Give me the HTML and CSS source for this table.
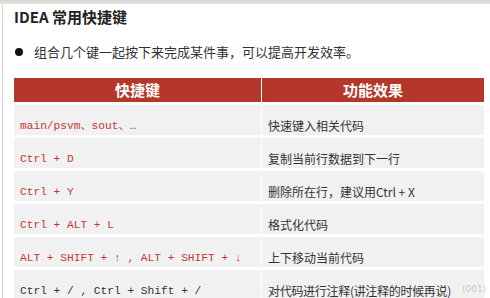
FILE: index.html
```html
<!DOCTYPE html>
<html lang="zh">
<head>
<meta charset="utf-8">
<link rel="stylesheet" href="styles.css">
</head>
<body>
<div class="topbar"></div>
<div class="page">
  <h1 class="title">IDEA 常用快捷键</h1>
  <p class="bullet"><span class="dot"></span>组合几个键一起按下来完成某件事，可以提高开发效率。</p>
  <div class="table">
    <div class="th">快捷键</div>
    <div class="th">功能效果</div>
    <div class="td key">main/psvm、sout、…</div>
    <div class="td">快速键入相关代码</div>
    <div class="td key">Ctrl + D</div>
    <div class="td">复制当前行数据到下一行</div>
    <div class="td key">Ctrl + Y</div>
    <div class="td">删除所在行，建议用Ctrl + X</div>
    <div class="td key">Ctrl + ALT + L</div>
    <div class="td">格式化代码</div>
    <div class="td key">ALT + SHIFT + ↑ , ALT + SHIFT + ↓</div>
    <div class="td">上下移动当前代码</div>
    <div class="td key dark">Ctrl + / , Ctrl + Shift + /</div>
    <div class="td last">对代码进行注释(讲注释的时候再说)</div>
  </div>
  <span class="mark">(001)</span>
</div>
</body>
</html>
```
FILE: styles.css
```css
html, body {
  margin: 0;
  padding: 0;
  background: #fff;
  overflow: hidden;
}
body {
  width: 490px;
  height: 298px;
  font-family: "Noto Sans CJK SC", "Noto Sans", sans-serif;
  color: #333;
}
.topbar {
  height: 4px;
  background: linear-gradient(#d6d5d0, #e6e5e1);
}
.page {
  position: relative;
  margin-left: 2px;
  border-left: 1px solid #d4d4d4;
  padding: 0 0 0 11px;
  height: 294px;
}
.title {
  margin: 0;
  padding-top: 3px;
  font-size: 15px;
  line-height: 20px;
  font-weight: 700;
  color: #222;
}
.bullet {
  margin: 16px 0 0 0;
  display: flex;
  align-items: center;
  font-size: 13px;
  line-height: 18px;
  color: #333;
}
.dot {
  width: 8px;
  height: 8px;
  border-radius: 50%;
  background: #111;
  margin: 0 11px 0 1px;
}
.table {
  margin-top: 17px;
  display: grid;
  grid-template-columns: 247px 222px;
  grid-template-rows: 24px;
  grid-auto-rows: 30px;
  column-gap: 1px;
  row-gap: 3px;
}
.th {
  background: #b5372a;
  color: #fff;
  font-weight: 700;
  font-size: 15px;
  line-height: 24px;
  text-align: center;
}
.td {
  background: #f1f1f1;
  padding: 14px 0 0 6px;
  font-size: 12px;
  line-height: 14px;
  color: #333;
  white-space: nowrap;
}
.td.last {
  letter-spacing: -0.3px;
}
.key {
  font-family: "Liberation Mono", "DejaVu Sans Mono", "Noto Sans CJK SC", monospace;
  font-size: 11.2px;
  color: #c23a2f;
}
.key.dark {
  color: #333;
}
.mark {
  position: absolute;
  left: 459px;
  top: 280px;
  font-size: 9px;
  color: #c8c8c8;
  font-family: "DejaVu Sans", sans-serif;
}
```
